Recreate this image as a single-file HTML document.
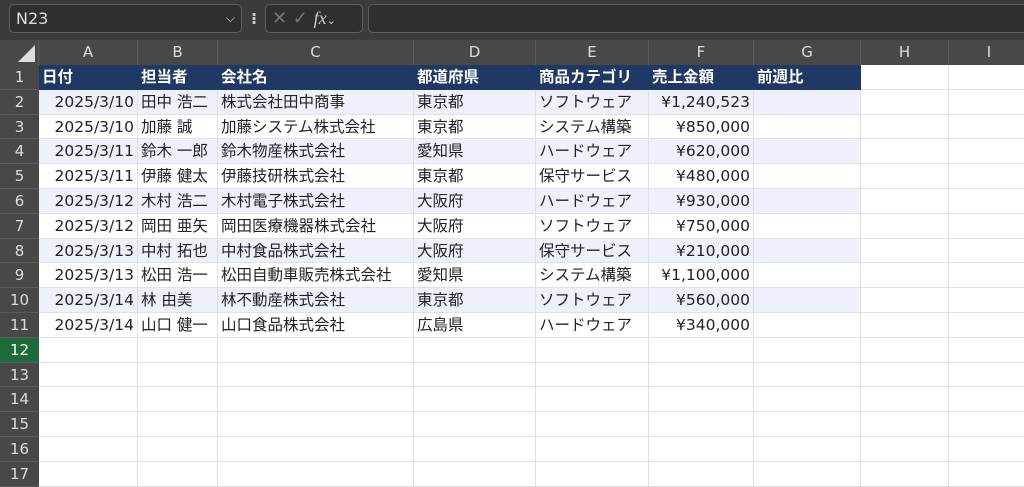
<!DOCTYPE html><html><head><meta charset="utf-8"><style>
*{margin:0;padding:0;box-sizing:border-box}
body{width:1024px;height:484px;overflow:hidden;background:#fff;font-family:"DejaVu Sans","Noto Sans CJK JP",sans-serif;position:relative}
.top{position:absolute;left:0;top:0;width:1024px;height:40px;background:#3b3b3b}
.box{position:absolute;border:1px solid #5e5e5e;border-radius:5px;background:#2f2f2f;color:#ddd}
.colh{position:absolute;top:40px;height:25px;background:#484848;color:#ddd;font-size:15px;text-align:center;line-height:25px;border-right:1px solid #5a5a5a}
.rowh{position:absolute;left:0;width:39px;background:#484848;color:#ddd;font-size:15px;text-align:center;border-bottom:1px solid #5a5a5a}
.c{position:absolute;font-size:15.5px;color:#222;white-space:nowrap;overflow:hidden;border-right:1px solid #e1e1e1;border-bottom:1px solid #e1e1e1;padding:0 3px}
.h{background:#203864;color:#fff;font-weight:bold;border-color:#203864}
.s{background:#eef1fb}
.r{text-align:right}
</style></head><body>
<div class="top"></div>
<div class="box" style="left:9px;top:4px;width:233px;height:29px;font-size:16px;line-height:27px;padding-left:6px">N23<span style="position:absolute;right:6px;top:0;font-size:12px">&#x2335;</span></div>
<div style="position:absolute;left:251px;top:9px;color:#ccc;font-size:16px;font-weight:bold">⁝</div>
<div class="box" style="left:265px;top:4px;width:98px;height:29px;font-size:18px;line-height:27px;color:#777;padding-left:6px">✕ ✓ <i style="color:#ccc;font-family:'Liberation Serif'">fx</i><span style="font-size:11px;color:#ccc">⌄</span></div>
<div class="box" style="left:368px;top:4px;width:670px;height:29px"></div>
<div style="position:absolute;left:0;top:40px;width:39px;height:25px;background:#484848;border-right:1px solid #5a5a5a"><div style="position:absolute;right:3px;bottom:3px;width:0;height:0;border-left:17px solid transparent;border-bottom:17px solid #ddd"></div></div>
<div id="g"></div>
<script>
var cols=[39,138,218,414,536,649,754,861,949,1030],L="ABCDEFGHI";
var data=[["日付","担当者","会社名","都道府県","商品カテゴリ","売上金額","前週比"],
["2025/3/10","田中 浩二","株式会社田中商事","東京都","ソフトウェア","¥1,240,523",""],
["2025/3/10","加藤 誠","加藤システム株式会社","東京都","システム構築","¥850,000",""],
["2025/3/11","鈴木 一郎","鈴木物産株式会社","愛知県","ハードウェア","¥620,000",""],
["2025/3/11","伊藤 健太","伊藤技研株式会社","東京都","保守サービス","¥480,000",""],
["2025/3/12","木村 浩二","木村電子株式会社","大阪府","ハードウェア","¥930,000",""],
["2025/3/12","岡田 亜矢","岡田医療機器株式会社","大阪府","ソフトウェア","¥750,000",""],
["2025/3/13","中村 拓也","中村食品株式会社","大阪府","保守サービス","¥210,000",""],
["2025/3/13","松田 浩一","松田自動車販売株式会社","愛知県","システム構築","¥1,100,000",""],
["2025/3/14","林 由美","林不動産株式会社","東京都","ソフトウェア","¥560,000",""],
["2025/3/14","山口 健一","山口食品株式会社","広島県","ハードウェア","¥340,000",""]];
var h="",rh=24.8,t0=65;
for(var i=0;i<9;i++)h+='<div class="colh" style="left:'+cols[i]+'px;width:'+(cols[i+1]-cols[i])+'px">'+L[i]+'</div>';
for(var r=0;r<17;r++){var y=t0+r*rh;
h+='<div class="rowh" style="top:'+y+'px;height:'+rh+'px;line-height:'+rh+'px;'+(r==11?'background:#1e6b3a;color:#fff':'')+'">'+(r+1)+'</div>';
for(var i=0;i<9;i++){var txt=(r<11&&i<7)?data[r][i]:"",cl="c";
if(r<11&&i<7){if(r==0)cl+=" h";else if(r%2==1)cl+=" s";if(r>0&&(i==0||i==5))cl+=" r";}
h+='<div class="'+cl+'" style="left:'+cols[i]+'px;top:'+y+'px;width:'+(cols[i+1]-cols[i])+'px;height:'+rh+'px;line-height:'+rh+'px">'+txt+'</div>';}}
document.getElementById("g").innerHTML=h;
</script>
</body></html>
